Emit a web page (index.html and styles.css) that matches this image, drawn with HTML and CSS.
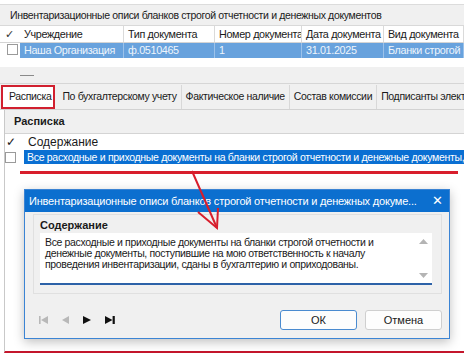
FILE: index.html
```html
<!DOCTYPE html>
<html lang="ru">
<head>
    <meta charset="UTF-8">
    <title>Инвентаризационные описи</title>
    <link rel="stylesheet" href="styles.css">
</head>
<body>
<div class="window">
    <div class="doc-title">Инвентаризационные описи бланков строгой отчетности и денежных документов</div>

    <!-- Список документов -->
    <div class="docs">
        <div class="docs-row head">
            <div class="cell chk">✓</div>
            <div class="cell">Учреждение</div>
            <div class="cell">Тип документа</div>
            <div class="cell">Номер документа</div>
            <div class="cell">Дата документа</div>
            <div class="cell">Вид документа</div>
        </div>
        <div class="docs-row sel">
            <div class="cell chk"><span class="box"></span></div>
            <div class="cell">Наша Организация</div>
            <div class="cell">ф.0510465</div>
            <div class="cell">1</div>
            <div class="cell">31.01.2025</div>
            <div class="cell">Бланки строгой отчетности</div>
        </div>
    </div>
    <div class="docs-space"></div>
    <div class="splitter"><span class="grip"></span></div>

    <!-- Вкладки -->
    <div class="tabs">
        <div class="tab active">Расписка</div>
        <div class="tab">По бухгалтерскому учету</div>
        <div class="tab">Фактическое наличие</div>
        <div class="tab">Состав комиссии</div>
        <div class="tab">Подписанты электронного документа</div>
    </div>

    <div class="panel">
        <div class="panel-head">Расписка</div>
        <div class="list-row head">
            <span class="chk">✓</span>
            <span>Содержание</span>
        </div>
        <div class="list-row sel">
            <span class="chk"><span class="box"></span></span>
            <span class="text">Все расходные и приходные документы на бланки строгой отчетности и денежные документы, поступившие на мою ответственность</span>
        </div>
        <div class="mark-line"></div>

        <!-- Диалог редактирования -->
        <div class="dialog">
            <div class="dialog-title">
                <span>Инвентаризационные описи бланков строгой отчетности и денежных докуме...</span>
                <span class="close">✕</span>
            </div>
            <div class="dialog-body">
                <div class="group">
                    <div class="group-label">Содержание</div>
                    <div class="memo">
                        <div class="memo-text">Все расходные и приходные документы на бланки строгой отчетности и денежные документы, поступившие на мою ответственность к началу проведения инвентаризации, сданы в бухгалтерию и оприходованы.</div>
                        <div class="scroll">
                            <svg width="9" height="6" viewBox="0 0 9 6"><path d="M0 6 L4.5 1 L9 6 Z" fill="#b4b4b4"/></svg>
                            <svg width="9" height="6" viewBox="0 0 9 6"><path d="M0 0 L4.5 5 L9 0 Z" fill="#b4b4b4"/></svg>
                        </div>
                    </div>
                </div>
                <div class="dialog-foot">
                    <div class="nav">
                        <svg width="9" height="8" viewBox="0 0 9 8"><rect x="0" y="0" width="1.6" height="8" fill="#b8b8b8"/><path d="M9 0 L2 4 L9 8 Z" fill="#b8b8b8"/></svg>
                        <svg width="7" height="8" viewBox="0 0 7 8"><path d="M7 0 L0 4 L7 8 Z" fill="#b8b8b8"/></svg>
                        <svg width="8" height="8" viewBox="0 0 8 8"><path d="M0 0 L8 4 L0 8 Z" fill="#111"/></svg>
                        <svg width="10" height="8" viewBox="0 0 10 8"><path d="M0 0 L7.5 4 L0 8 Z" fill="#111"/><rect x="7.6" y="0" width="2.2" height="8" fill="#111"/></svg>
                    </div>
                    <button class="btn btn-ok">ОК</button>
                    <button class="btn">Отмена</button>
                </div>
            </div>
        </div>
    </div>

    <!-- Стрелка-пометка -->
    <svg class="arrow" width="464" height="357" viewBox="0 0 464 357">
        <path d="M192 171 L217 228" stroke="#d81e2c" stroke-width="2" fill="none"/>
        <path d="M198 212 L217 228 L218 208" stroke="#d81e2c" stroke-width="2" fill="none"/>
    </svg>
</div>
</body>
</html>
```

FILE: styles.css
```css
body {
    margin: 0;
    background: #fff;
    font-family: "Liberation Sans", Arial, sans-serif;
    font-size: 10.5px;
    letter-spacing: -0.35px;
    color: #1a1a1a;
}
.window {
    position: relative;
    width: 464px;
    height: 357px;
    overflow: hidden;
    background: #fff;
}
.doc-title {
    margin-top: 4px;
    height: 20px;
    line-height: 20px;
    padding-left: 10px;
    background: #f0f0f0;
    border-top: 1px solid #dcdcdc;
    border-bottom: 1px solid #d9d9d9;
    white-space: nowrap;
}
.docs-row {
    display: grid;
    grid-template-columns: 20px 104px 91px 87px 82px 1fr;
    white-space: nowrap;
    font-size: 10.8px;
    letter-spacing: -0.35px;
}
.docs-row .cell {
    overflow: hidden;
    padding-left: 4px;
}
.docs-row.head {
    height: 16px;
    line-height: 16px;
    border-bottom: 1px solid #d4d4d4;
}
.docs-row.head .cell {
    border-right: 1px solid #dadada;
}
.docs-row.sel {
    height: 15px;
    line-height: 15px;
}
.docs-row.sel .cell {
    background: #68a2dd;
    color: #eef5fc;
    border-right: 1px solid #9cc2ea;
}
.docs-row .cell.chk {
    background: #fff;
    color: #333;
    padding-left: 5px;
    border-right: none;
}
.docs-row.sel .cell.chk {
    padding-left: 7px;
}
.box {
    display: inline-block;
    width: 9px;
    height: 9px;
    border: 1px solid #9a9a9a;
    background: #fff;
    vertical-align: -1px;
}
.docs-space {
    height: 9px;
}
.splitter {
    height: 16px;
    background: #f0f0f0;
    border-bottom: 1px solid #d6d6d6;
}
.grip {
    display: block;
    width: 14px;
    height: 1px;
    background: #8a8a8a;
    margin-left: 20px;
    position: relative;
    top: 8px;
}
.tabs {
    display: flex;
    height: 24px;
    padding-top: 1px;
    background: #f0f0f0;
    border-bottom: 1px solid #d2d2d2;
    white-space: nowrap;
}
.tab {
    padding: 0 4px 0 4px;
    line-height: 23px;
    border-right: 1px solid #d8d8d8;
}
.tab.active {
    background: #fff;
    margin: 0 3px 0 1px;
    padding: 0 2px 0 6px;
    border: 2px solid #d1202f;
    line-height: 19px;
}
.panel {
    border-left: 1px solid #c9c9c9;
    margin-left: 4px;
    height: 241px;
    border-bottom: 2px solid #c4162c;
}
.panel-head {
    height: 23px;
    line-height: 23px;
    padding-left: 9px;
    background: #f0f0f0;
    border-bottom: 1px solid #d4d4d4;
    font-weight: bold;
    font-size: 11px;
    letter-spacing: 0;
}
.list-row {
    display: flex;
    white-space: nowrap;
}
.list-row .chk {
    width: 19px;
    flex: none;
}
.list-row.head {
    height: 16px;
    line-height: 16px;
    font-size: 12px;
    letter-spacing: 0;
}
.list-row.head .chk {
    padding-left: 1px;
    width: 22px;
}
.list-row.sel {
    height: 14px;
    line-height: 14px;
    letter-spacing: -0.3px;
}
.list-row.sel .box {
    vertical-align: -2px;
}
.list-row.sel .text {
    background: #0a6fd2;
    color: #fff;
    padding-left: 3px;
    flex: 1;
    overflow: hidden;
}
.mark-line {
    margin: 7px 6px 0 15px;
    height: 3px;
    background: #d81e2c;
}
.dialog {
    margin: 15px 0 0 19px;
    width: 424px;
    height: 148px;
    border: 1px solid #3b84d4;
    background: #f0f0f0;
    box-shadow: 0 3px 10px rgba(0, 0, 0, 0.25);
}
.dialog-title {
    display: flex;
    justify-content: space-between;
    height: 22px;
    line-height: 22px;
    padding: 0 6px 0 4px;
    background: #0c6fcf;
    color: #fff;
    font-size: 11px;
    letter-spacing: -0.2px;
    white-space: nowrap;
}
.close {
    font-size: 13px;
}
.dialog-body {
    padding: 2px 7px 0 8px;
}
.group {
    border: 1px solid #e0e0e0;
    height: 78px;
    padding: 0 9px 0 6px;
}
.group-label {
    font-weight: bold;
    font-size: 11px;
    letter-spacing: 0;
    height: 16px;
    line-height: 16px;
    margin-top: 2px;
}
.memo {
    display: flex;
    height: 50px;
    background: #fff;
    border-bottom: 2px solid #2d62a8;
}
.memo-text {
    flex: 1;
    padding: 4px 0 0 5px;
    line-height: 11px;
}
.scroll {
    width: 18px;
    display: flex;
    flex-direction: column;
    justify-content: space-between;
    align-items: center;
    padding: 5px 0 4px;
}
.dialog-foot {
    display: flex;
    align-items: center;
    margin-top: 16px;
}
.nav {
    display: flex;
    align-items: center;
    gap: 14px;
    padding-left: 6px;
    flex: 1;
}
.btn {
    width: 77px;
    height: 20px;
    margin-left: 8px;
    background: #fdfdfd;
    border: 1px solid #cfcfcf;
    border-radius: 3px;
    font-family: "Liberation Sans", Arial, sans-serif;
    font-size: 11px;
    color: #1a1a1a;
}
.btn-ok {
    border: 1px solid #4a8bd0;
}
.arrow {
    position: absolute;
    left: 0;
    top: 0;
    pointer-events: none;
}
```
